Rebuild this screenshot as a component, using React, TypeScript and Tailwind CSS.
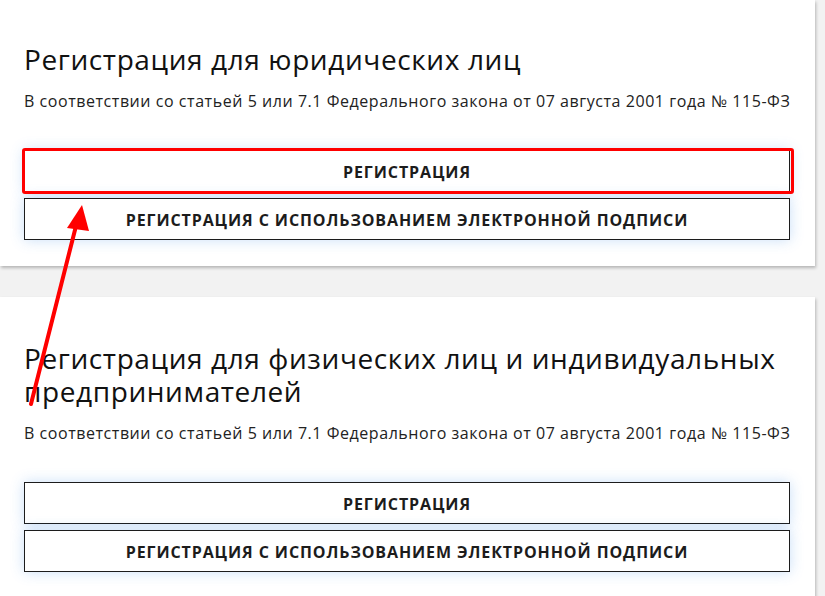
import React from 'react'

const font = { fontFamily: '"Open Sans", "Noto Sans", sans-serif' }

function RegButton({ label }: { label: string }) {
  return (
    <button
      type="button"
      className="flex h-[42px] w-full items-center justify-center border border-[#1c1c1c] bg-white pt-[1px] text-[16px] font-bold uppercase tracking-[0.9px] text-[#1c1c1c] shadow-[0_0_14px_rgba(60,140,230,0.28)]"
    >
      {label}
    </button>
  )
}

function RegCard({
  title,
  className,
  children,
}: {
  title: string
  className?: string
  children?: React.ReactNode
}) {
  return (
    <section
      className={`w-[815px] bg-white px-6 shadow-[1px_2px_3px_rgba(0,0,0,0.25)] ${className ?? ''}`}
    >
      <h2 className="text-[28px] leading-[33px] font-normal text-[#111] tracking-[0.6px]">
        {title}
      </h2>
      <p className="mt-[14px] whitespace-nowrap text-[16px] leading-[22px] tracking-[0.55px] text-[#222]">
        В соответствии со статьей 5 или 7.1 Федерального закона от 07 августа
        2001 года № 115-ФЗ
      </p>
      <div className="relative mt-[38px] flex w-[766px] flex-col gap-[6px]">
        <RegButton label="Регистрация" />
        <RegButton label="Регистрация с использованием электронной подписи" />
        {children}
      </div>
    </section>
  )
}

export default function App() {
  return (
    <div
      className="relative h-[596px] w-[825px] overflow-hidden bg-[#f2f2f2]"
      style={font}
    >
      <RegCard
        title="Регистрация для юридических лиц"
        className="pt-[43px] pb-[26px]"
      >
        {/* annotation highlight */}
        <div className="pointer-events-none absolute -left-[2px] -top-[2px] h-[46px] w-[772px] rounded-[3px] border-[3px] border-[#ff0000]" />
      </RegCard>
      <RegCard
        title="Регистрация для физических лиц и индивидуальных предпринимателей"
        className="mt-[31px] pt-[45px] pb-[40px]"
      />

      {/* annotation arrow */}
      <svg
        className="pointer-events-none absolute left-0 top-0"
        width="825"
        height="596"
        viewBox="0 0 825 596"
      >
        <line
          x1="31"
          y1="404"
          x2="77"
          y2="222"
          stroke="#ff0000"
          strokeWidth="4"
          strokeLinecap="round"
        />
        <polygon points="82,205 67,228 89,231" fill="#ff0000" />
      </svg>
    </div>
  )
}
